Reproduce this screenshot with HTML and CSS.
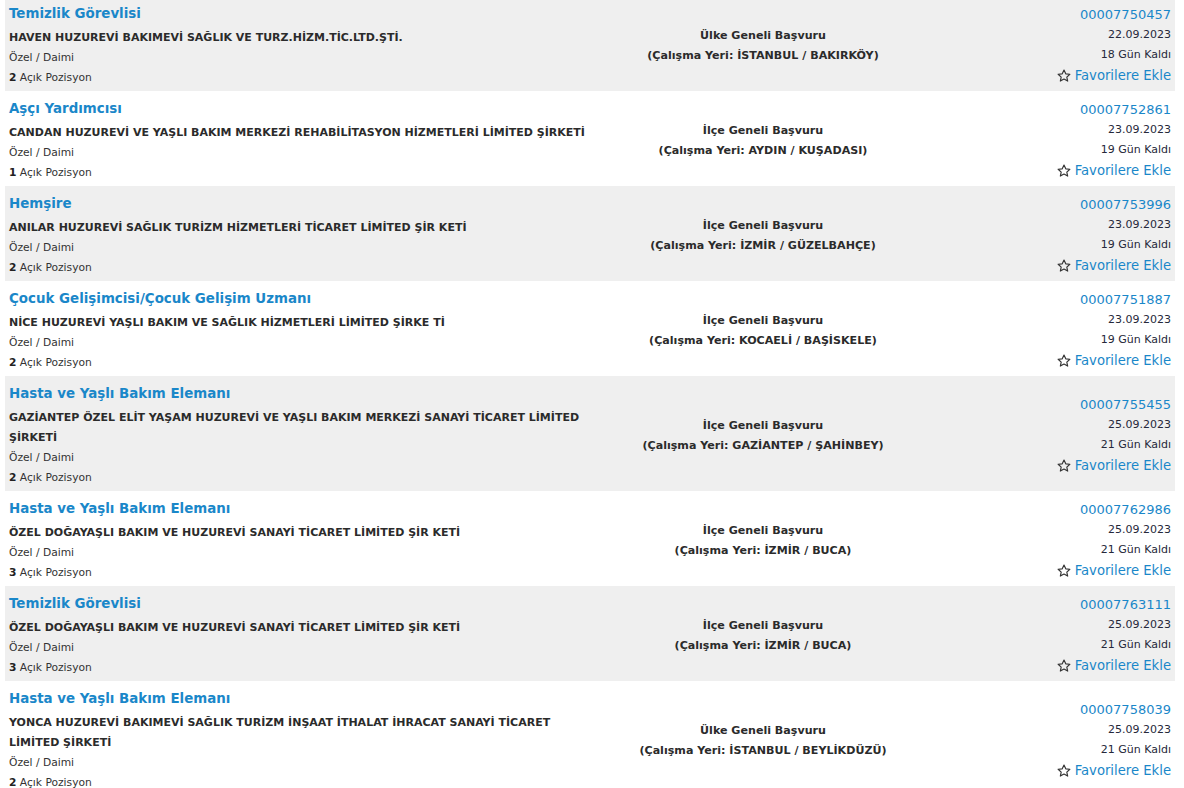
FILE: index.html
```html
<!DOCTYPE html>
<html lang="tr">
<head>
<meta charset="utf-8">
<title>İlanlar</title>
<link rel="stylesheet" href="styles.css">
</head>
<body>
<svg width="0" height="0" class="defs">
  <defs>
    <symbol id="star" viewBox="0 0 16 16">
      <path d="M8 1.2l2 4.3 4.7.5-3.5 3.2 1 4.6L8 11.5l-4.2 2.3 1-4.6L1.3 6l4.7-.5z" fill="none" stroke="#333" stroke-width="1.3" stroke-linejoin="round"/>
    </symbol>
  </defs>
</svg>
<div class="list">
  <div class="row alt">
    <div class="left">
      <a class="title">Temizlik Görevlisi</a>
      <div class="company">HAVEN HUZUREVİ BAKIMEVİ SAĞLIK VE TURZ.HİZM.TİC.LTD.ŞTİ.</div>
      <div class="small">Özel / Daimi</div>
      <div class="small"><b>2</b> Açık Pozisyon</div>
    </div>
    <div class="mid">Ülke Geneli Başvuru<br>(Çalışma Yeri: İSTANBUL / BAKIRKÖY)</div>
    <div class="right">
      <a class="id">00007750457</a>
      <div class="date">22.09.2023</div>
      <div class="days">18 Gün Kaldı</div>
      <a class="fav"><svg class="star"><use href="#star"/></svg>Favorilere Ekle</a>
    </div>
  </div>
  <div class="row">
    <div class="left">
      <a class="title">Aşçı Yardımcısı</a>
      <div class="company">CANDAN HUZUREVİ VE YAŞLI BAKIM MERKEZİ REHABİLİTASYON HİZMETLERİ LİMİTED ŞİRKETİ</div>
      <div class="small">Özel / Daimi</div>
      <div class="small"><b>1</b> Açık Pozisyon</div>
    </div>
    <div class="mid">İlçe Geneli Başvuru<br>(Çalışma Yeri: AYDIN / KUŞADASI)</div>
    <div class="right">
      <a class="id">00007752861</a>
      <div class="date">23.09.2023</div>
      <div class="days">19 Gün Kaldı</div>
      <a class="fav"><svg class="star"><use href="#star"/></svg>Favorilere Ekle</a>
    </div>
  </div>
  <div class="row alt">
    <div class="left">
      <a class="title">Hemşire</a>
      <div class="company">ANILAR HUZUREVİ SAĞLIK TURİZM HİZMETLERİ TİCARET LİMİTED ŞİR KETİ</div>
      <div class="small">Özel / Daimi</div>
      <div class="small"><b>2</b> Açık Pozisyon</div>
    </div>
    <div class="mid">İlçe Geneli Başvuru<br>(Çalışma Yeri: İZMİR / GÜZELBAHÇE)</div>
    <div class="right">
      <a class="id">00007753996</a>
      <div class="date">23.09.2023</div>
      <div class="days">19 Gün Kaldı</div>
      <a class="fav"><svg class="star"><use href="#star"/></svg>Favorilere Ekle</a>
    </div>
  </div>
  <div class="row">
    <div class="left">
      <a class="title">Çocuk Gelişimcisi/Çocuk Gelişim Uzmanı</a>
      <div class="company">NİCE HUZUREVİ YAŞLI BAKIM VE SAĞLIK HİZMETLERİ LİMİTED ŞİRKE Tİ</div>
      <div class="small">Özel / Daimi</div>
      <div class="small"><b>2</b> Açık Pozisyon</div>
    </div>
    <div class="mid">İlçe Geneli Başvuru<br>(Çalışma Yeri: KOCAELİ / BAŞİSKELE)</div>
    <div class="right">
      <a class="id">00007751887</a>
      <div class="date">23.09.2023</div>
      <div class="days">19 Gün Kaldı</div>
      <a class="fav"><svg class="star"><use href="#star"/></svg>Favorilere Ekle</a>
    </div>
  </div>
  <div class="row alt">
    <div class="left">
      <a class="title">Hasta ve Yaşlı Bakım Elemanı</a>
      <div class="company">GAZİANTEP ÖZEL ELİT YAŞAM HUZUREVİ VE YAŞLI BAKIM MERKEZİ SANAYİ TİCARET LİMİTED ŞİRKETİ</div>
      <div class="small">Özel / Daimi</div>
      <div class="small"><b>2</b> Açık Pozisyon</div>
    </div>
    <div class="mid">İlçe Geneli Başvuru<br>(Çalışma Yeri: GAZİANTEP / ŞAHİNBEY)</div>
    <div class="right">
      <a class="id">00007755455</a>
      <div class="date">25.09.2023</div>
      <div class="days">21 Gün Kaldı</div>
      <a class="fav"><svg class="star"><use href="#star"/></svg>Favorilere Ekle</a>
    </div>
  </div>
  <div class="row">
    <div class="left">
      <a class="title">Hasta ve Yaşlı Bakım Elemanı</a>
      <div class="company">ÖZEL DOĞAYAŞLI BAKIM VE HUZUREVİ SANAYİ TİCARET LİMİTED ŞİR KETİ</div>
      <div class="small">Özel / Daimi</div>
      <div class="small"><b>3</b> Açık Pozisyon</div>
    </div>
    <div class="mid">İlçe Geneli Başvuru<br>(Çalışma Yeri: İZMİR / BUCA)</div>
    <div class="right">
      <a class="id">00007762986</a>
      <div class="date">25.09.2023</div>
      <div class="days">21 Gün Kaldı</div>
      <a class="fav"><svg class="star"><use href="#star"/></svg>Favorilere Ekle</a>
    </div>
  </div>
  <div class="row alt">
    <div class="left">
      <a class="title">Temizlik Görevlisi</a>
      <div class="company">ÖZEL DOĞAYAŞLI BAKIM VE HUZUREVİ SANAYİ TİCARET LİMİTED ŞİR KETİ</div>
      <div class="small">Özel / Daimi</div>
      <div class="small"><b>3</b> Açık Pozisyon</div>
    </div>
    <div class="mid">İlçe Geneli Başvuru<br>(Çalışma Yeri: İZMİR / BUCA)</div>
    <div class="right">
      <a class="id">00007763111</a>
      <div class="date">25.09.2023</div>
      <div class="days">21 Gün Kaldı</div>
      <a class="fav"><svg class="star"><use href="#star"/></svg>Favorilere Ekle</a>
    </div>
  </div>
  <div class="row">
    <div class="left">
      <a class="title">Hasta ve Yaşlı Bakım Elemanı</a>
      <div class="company">YONCA HUZUREVİ BAKIMEVİ SAĞLIK TURİZM İNŞAAT İTHALAT İHRACAT SANAYİ TİCARET LİMİTED ŞİRKETİ</div>
      <div class="small">Özel / Daimi</div>
      <div class="small"><b>2</b> Açık Pozisyon</div>
    </div>
    <div class="mid">Ülke Geneli Başvuru<br>(Çalışma Yeri: İSTANBUL / BEYLİKDÜZÜ)</div>
    <div class="right">
      <a class="id">00007758039</a>
      <div class="date">25.09.2023</div>
      <div class="days">21 Gün Kaldı</div>
      <a class="fav"><svg class="star"><use href="#star"/></svg>Favorilere Ekle</a>
    </div>
  </div>
</div>
</body>
</html>
```
FILE: styles.css
```css
html, body {
  margin: 0;
  padding: 0;
  background: #ffffff;
  overflow: hidden;
}
body {
  font-family: "DejaVu Sans", Verdana, sans-serif;
  color: #333;
}
.defs {
  display: block;
  width: 0;
  height: 0;
}
.list {
  margin: -4px 9px 0 5px;
}
.row {
  display: grid;
  grid-template-columns: 597px 314px 1fr;
  align-items: center;
  padding: 8px 4px 3px 4px;
}
.row.alt {
  background: #efefef;
}
.left {
  align-self: start;
}
.title {
  display: block;
  color: #1a87c9;
  font-weight: bold;
  font-size: 13.4px;
  line-height: 20px;
  margin-bottom: 4px;
}
.company {
  font-weight: bold;
  font-size: 11px;
  line-height: 20px;
  color: #2b2b2b;
  padding-right: 14px;
}
.small {
  font-size: 10.7px;
  line-height: 20px;
  color: #333;
}
.small b {
  font-weight: bold;
  color: #222;
}
.mid {
  text-align: center;
  font-weight: bold;
  font-size: 11.1px;
  line-height: 20px;
  color: #2b2b2b;
}
.right {
  display: flex;
  flex-direction: column;
  align-items: flex-end;
  font-size: 11px;
  line-height: 20px;
  color: #26283a;
  margin-top: -2px;
}
.id {
  display: block;
  color: #1a87c9;
  font-size: 13px;
  line-height: 20px;
}
.date,
.days {
  line-height: 20.5px;
}
.fav {
  display: flex;
  align-items: center;
  gap: 4px;
  height: 20px;
  color: #1a87c9;
  font-size: 13.2px;
}
.star {
  width: 14px;
  height: 14px;
}
```
